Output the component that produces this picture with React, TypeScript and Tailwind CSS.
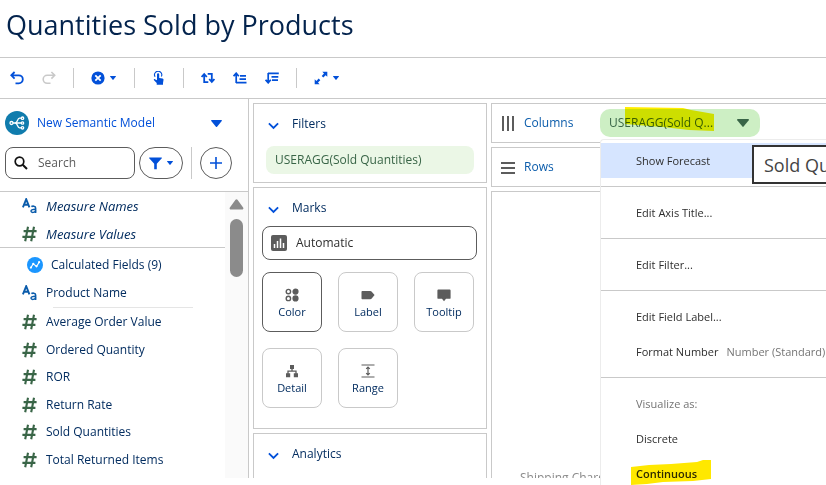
import React from "react";

type FieldKind = "text" | "number";

function TextFieldIcon() {
  return (
    <svg width="15" height="16" viewBox="0 0 15 16" fill="none" stroke="#0b5cab" aria-hidden="true">
      <path d="M.9 9.4 4.2 1.2l3.2 8.2M2 6.8h4.3" strokeWidth="1.9" />
      <path d="M9.4 8.7c.8-.7 4.2-1.1 4.2 1.2v5" strokeWidth="1.6" />
      <path d="M13.6 11.2c-2.3 0-4.6.2-4.6 1.9 0 2.2 4.6 1.5 4.6-.6" strokeWidth="1.4" />
    </svg>
  );
}

function NumberFieldIcon() {
  return (
    <svg width="15" height="16" viewBox="0 0 15 16" fill="none" stroke="#396547" strokeWidth="2.1" aria-hidden="true">
      <path d="M6 .8 3.2 15.2M12 .8 9.2 15.2M1.6 5.1h13M.4 10.9h13" />
    </svg>
  );
}

function Caret({ className }: { className: string }) {
  return (
    <svg className={className} viewBox="0 0 10 6" fill="currentColor" preserveAspectRatio="none" aria-hidden="true">
      <path d="M.6 0h8.8c.5 0 .7.5.4.9L5.5 5.7a.7.7 0 0 1-1 0L.2.9C-.1.5.1 0 .6 0z" />
    </svg>
  );
}

function Chevron() {
  return (
    <svg className="mt-1" width="11" height="8" viewBox="0 0 11 8" fill="none" stroke="#0250d9" strokeWidth="1.8" aria-hidden="true">
      <path d="M.9 1.3 5.5 5.9l4.6-4.6" />
    </svg>
  );
}

function ToolButton({ label, children }: { label: string; children: React.ReactNode }) {
  return (
    <button type="button" aria-label={label} className="flex h-5 items-center gap-1 text-[#0250d9]">
      {children}
    </button>
  );
}

function ToolDivider() {
  return <span className="h-5 w-px bg-[#c9c9c9]" />;
}

function Toolbar() {
  return (
    <div role="toolbar" aria-label="Visualization" className="flex h-[41px] shrink-0 items-center border-b border-[#c9c9c9] pl-[10px]">
      <div className="flex w-[63px] items-center gap-[18px]">
        <ToolButton label="Undo">
          <svg width="14" height="14" viewBox="0 0 14 14" fill="none" stroke="currentColor" strokeWidth="1.8">
            <path d="M4.6 1 1.3 4.3l3.3 3.3M1.6 4.3h7.2a4 4 0 0 1 0 8H5.5" />
          </svg>
        </ToolButton>
        <button type="button" aria-label="Redo" disabled className="flex h-5 items-center text-[#c9c9c9]">
          <svg width="14" height="14" viewBox="0 0 14 14" fill="none" stroke="currentColor" strokeWidth="1.6">
            <path d="M9.4 1l3.3 3.3-3.3 3.3M12.4 4.3H5.2a4 4 0 0 0 0 8h3.3" />
          </svg>
        </button>
      </div>
      <ToolDivider />
      <div className="flex w-[60px] items-center pl-[17px]">
        <ToolButton label="Clear">
          <svg width="14" height="14" viewBox="0 0 14 14">
            <circle cx="7" cy="7" r="6.6" fill="currentColor" />
            <path d="M4.3 4.3l5.4 5.4M9.7 4.3 4.3 9.7" stroke="#fff" strokeWidth="1.8" />
          </svg>
          <Caret className="ml-px h-1 w-[6px]" />
        </ToolButton>
      </div>
      <ToolDivider />
      <div className="flex w-12 items-center justify-center">
        <ToolButton label="Interact">
          <svg width="12" height="14" viewBox="0 0 12 14">
            <path d="M2.1 5.8A3.6 3.6 0 1 1 8.3 5.6" fill="none" stroke="currentColor" strokeWidth="1.1" />
            <path d="M4 3.4a1.1 1.1 0 0 1 2.2 0V7l3.3.6c.7.1 1.1.6 1 1.3l-.5 3H3.7L1 9.3c-.6-.7.1-1.5.9-1.1L4 9.3zM3.7 11.5h6.3v2.3H3.7z" fill="currentColor" />
          </svg>
        </ToolButton>
      </div>
      <ToolDivider />
      <div className="flex w-28 items-center justify-center gap-[18px]">
        <ToolButton label="Swap rows and columns">
          <svg width="14" height="12" viewBox="0 0 14 12" fill="none" stroke="currentColor" strokeWidth="1.8">
            <path d="M3.2 11V2.5M.6 5l2.6-3 2.6 3M3 10.2h4.3M10.8 1v8.5M8.2 7l2.6 3 2.6-3M6.7 1.8H11" />
          </svg>
        </ToolButton>
        <ToolButton label="Sort ascending">
          <svg width="14" height="12" viewBox="0 0 14 12" fill="none" stroke="currentColor" strokeWidth="1.7">
            <path d="M3.2 11V1.5M.6 4.2l2.6-3 2.6 3M3 10.6h10.5M6.500 7.200h6.500M7 3.800h6" />
          </svg>
        </ToolButton>
        <ToolButton label="Sort descending">
          <svg width="14" height="12" viewBox="0 0 14 12" fill="none" stroke="currentColor" strokeWidth="1.7">
            <path d="M3.2 1v9.5M.6 7.800l2.600 3 2.600-3M3 1.400h10.800M6.500 4.800h6.800M7 8.200h6" />
          </svg>
        </ToolButton>
      </div>
      <ToolDivider />
      <div className="flex items-center pl-[17px]">
        <ToolButton label="Fit">
          <svg width="14" height="14" viewBox="0 0 14 14" fill="currentColor">
            <path d="M8.300.8h5v5l-1.700-1.600-2.300 2.300-1.600-1.600L10 2.600zM.7 8.300l1.700 1.600 2.300-2.300 1.600 1.600L4 11.500l1.600 1.700H.7z" />
          </svg>
          <Caret className="ml-px h-1 w-[6px]" />
        </ToolButton>
      </div>
    </div>
  );
}

function Field({ kind, italic, children }: { kind: FieldKind; italic?: boolean; children: string }) {
  return (
    <li className="flex h-7 items-center gap-[9px] pl-[22px] even:h-[27px]">
      {kind === "text" ? <TextFieldIcon /> : <NumberFieldIcon />}
      <span className={italic ? "text-[13px] italic" : ""}>{children}</span>
    </li>
  );
}

const measures = [
  "Average Order Value",
  "Ordered Quantity",
  "ROR",
  "Return Rate",
  "Sold Quantities",
  "Total Returned Items",
];

function DataPanel() {
  return (
    <aside className="flex w-[249px] shrink-0 flex-col border-r border-[#c9c9c9]">
      <div className="flex h-12 shrink-0 items-center pl-[5px]">
        <svg width="24" height="24" viewBox="0 0 24 24" aria-hidden="true">
          <circle cx="12" cy="12" r="12" fill="#107cad" />
          <g fill="none" stroke="#fff" strokeWidth="1.3">
            <circle cx="6.5" cy="12" r="1.500" />
            <path d="M8 12h8M16.500 7.200h-2c-2.500 0-1.500 4.800-4.500 4.800 3 0 2 4.800 4.500 4.800h2" />
            <circle cx="17.500" cy="7.200" r="1.200" />
            <circle cx="17.500" cy="12" r="1.200" />
            <circle cx="17.500" cy="16.800" r="1.200" />
          </g>
        </svg>
        <button type="button" className="ml-2 flex flex-1 items-center justify-between pr-[26px] text-[#0250d9]">
          New Semantic Model
          <Caret className="h-[7px] w-[11px]" />
        </button>
      </div>
      <div className="flex h-[45px] shrink-0 items-start border-b border-[#c9c9c9] pl-[5px]">
        <label className="flex h-8 w-[130px] items-center rounded-lg border border-[#5c5c5c] pl-2">
          <svg width="14" height="14" viewBox="0 0 14 14" fill="none" stroke="#111" aria-label="Search fields">
            <circle cx="5.500" cy="5.500" r="4.300" strokeWidth="1.700" />
            <path d="m8.700 8.700 4.300 4.300" strokeWidth="2" />
          </svg>
          <input type="search" placeholder="Search" className="ml-[10px] w-20 bg-transparent outline-none placeholder:text-[#5c5c5c]" />
        </label>
        <button type="button" aria-label="Filter fields" className="ml-1 flex h-8 w-11 items-center justify-center gap-[5px] rounded-full border border-[#5c5c5c] text-[#0250d9]">
          <svg width="13" height="13" viewBox="0 0 13 13" fill="currentColor">
            <path d="M.5.500h12c.5 0 .6.500.3.800L7.800 6.800v5.500H5.200V6.800L.2 1.300C-.1 1 0 .500.500.500z" />
          </svg>
          <Caret className="h-1 w-[6px]" />
        </button>
        <span className="ml-2 h-8 w-px bg-[#c9c9c9]" />
        <button type="button" aria-label="Add" className="ml-2 flex size-8 items-center justify-center rounded-full border border-[#5c5c5c]">
          <svg width="12" height="12" viewBox="0 0 12 12" stroke="#0250d9" strokeWidth="1.600">
            <path d="M6 0v12M0 6h12" />
          </svg>
        </button>
      </div>
      <div className="flex min-h-0 flex-1 overflow-hidden">
        <div className="min-w-0 flex-1 text-[#032d60]">
          <ul className="border-b border-[#c9c9c9]">
            <Field kind="text" italic>Measure Names</Field>
            <Field kind="number" italic>Measure Values</Field>
          </ul>
          <div className="flex h-[31px] items-center gap-2 pt-[2px] pl-[27px]">
            <svg width="16" height="16" viewBox="0 0 16 16" aria-hidden="true">
              <circle cx="8" cy="8" r="8" fill="#1b96ff" />
              <path d="m3.800 10.700 2.400-3.800 3.400 2.500 2.600-4.200" fill="none" stroke="#fff" strokeWidth="1.100" />
              <g fill="#fff">
                <circle cx="3.900" cy="10.600" r="1.100" />
                <circle cx="6.300" cy="6.800" r="1.100" />
                <circle cx="9.500" cy="9.300" r="1.100" />
                <circle cx="12.100" cy="5.200" r="1.100" />
              </g>
            </svg>
            Calculated Fields (9)
          </div>
          <ul>
            <Field kind="text">Product Name</Field>
          </ul>
          <div className="ml-[53px] h-px w-[140px] bg-[#e5e5e5]" />
          <ul>
            {measures.map((name) => (
              <Field key={name} kind="number">{name}</Field>
            ))}
          </ul>
        </div>
        <div className="flex w-[23px] flex-col items-center bg-[#fafafa] pt-[7px]">
          <svg width="15" height="11" viewBox="0 0 15 11" fill="#8b8b8b" aria-hidden="true">
            <path d="M6.500.8a1.300 1.300 0 0 1 2 0l5.600 7.600c.7 1 .2 2.200-.9 2.200H1.800C.7 10.600.2 9.400.9 8.400z" />
          </svg>
          <span className="mt-[9px] h-[58px] w-[13px] rounded-full bg-[#8b8b8b]" />
        </div>
      </div>
    </aside>
  );
}

function CardHeader({ children }: { children: string }) {
  return (
    <h2>
      <button type="button" aria-expanded="true" className="flex h-10 w-full items-center gap-[13px] pl-[14px] text-[#032d60]">
        <Chevron />
        {children}
      </button>
    </h2>
  );
}

function Tile({ label, selected, children }: { label: string; selected?: boolean; children: React.ReactNode }) {
  return (
    <button
      type="button"
      className={
        "flex size-15 flex-col items-center justify-end rounded-lg border pb-[11px] text-[11px] text-[#032d60] " +
        (selected ? "border-[#5c5c5c]" : "border-[#c9c9c9]")
      }
    >
      <svg width="14" height="14" viewBox="0 0 14 14" fill="#5c5c5c" aria-hidden="true">
        {children}
      </svg>
      <span className="mt-[2px] leading-4">{label}</span>
    </button>
  );
}

function ShelfPanel() {
  return (
    <div className="flex w-[234px] shrink-0 flex-col gap-1 overflow-hidden">
      <section className="h-20 shrink-0 border border-[#c9c9c9]">
        <CardHeader>Filters</CardHeader>
        <button type="button" className="ml-3 mt-[2px] flex h-7 w-52 items-center rounded-lg bg-[#ebf7e6] pl-[9px] text-[#396547]">
          USERAGG(Sold Quantities)
        </button>
      </section>
      <section className="h-[242px] shrink-0 border border-[#c9c9c9]">
        <CardHeader>Marks</CardHeader>
        <div className="ml-2 mr-[9px] -mt-[2px] flex h-[34px] items-center rounded-lg border border-[#5c5c5c] pl-2">
          <svg width="16" height="16" viewBox="0 0 16 16" aria-hidden="true">
            <rect width="16" height="16" rx="2" fill="#5c5c5c" />
            <path d="M3.500 9v4M6.500 6v7M9.500 3.500V13M12.500 8v5" stroke="#fff" strokeWidth="1.500" />
          </svg>
          <select aria-label="Mark type" className="ml-[9px] flex-1 appearance-none bg-transparent text-[#2e2e2e] outline-none">
            <option>Automatic</option>
          </select>
        </div>
        <div className="ml-2 mt-3 grid grid-cols-[repeat(3,60px)] gap-4">
          <Tile label="Color" selected>
            <g stroke="#5c5c5c" strokeWidth="1.400">
              <circle cx="3.400" cy="3.600" r="2.200" fill="#fff" />
              <circle cx="10.500" cy="3.600" r="2.400" />
              <circle cx="3.400" cy="10.400" r="2.200" fill="#fff" />
              <circle cx="10.500" cy="10.400" r="2.400" />
            </g>
          </Tile>
          <Tile label="Label">
            <path d="M1.500 3h7.800c.5 0 .9.200 1.200.6L13.600 7l-3.100 3.700c-.3.300-.7.500-1.200.5H1.500C.9 11.200.5 10.800.5 10.200V4c0-.6.400-1 1-1z" />
          </Tile>
          <Tile label="Tooltip">
            <path d="M1.300 1.500h11.400c.5 0 .9.400.9.900v7.500c0 .5-.4.900-.9.900H9L7 13.200l-2-2.400H1.300c-.5 0-.9-.4-.9-.9V2.400c0-.5.400-.9.900-.9z" />
          </Tile>
          <Tile label="Detail">
            <path d="M5 1h4v4H5zM1 9.200h4.200v4H1zM8.800 9.200H13v4H8.800z" />
            <path d="M7 4v3.200M3 10V7.200h8V10" fill="none" stroke="#5c5c5c" strokeWidth="1.300" />
          </Tile>
          <Tile label="Range">
            <path d="M.5 1h13M.5 13h13M7 3v8M5.200 4.800 7 3l1.800 1.800M5.200 9.200 7 11l1.800-1.800" fill="none" stroke="#5c5c5c" strokeWidth="1.200" />
          </Tile>
        </div>
      </section>
      <section className="min-h-0 flex-1 border border-b-0 border-[#c9c9c9]">
        <CardHeader>Analytics</CardHeader>
      </section>
    </div>
  );
}

function MenuItem({ active, strong, children }: { active?: boolean; strong?: boolean; children: React.ReactNode }) {
  return (
    <button
      type="button"
      role="menuitem"
      className={
        "flex h-[35px] w-full items-center gap-2 whitespace-nowrap pl-[35px] text-left " +
        (active ? "bg-[#d6e5ff] " : "") +
        (strong ? "font-semibold" : "")
      }
    >
      {children}
    </button>
  );
}

function MenuDivider() {
  return <hr className="my-2 border-[#c9c9c9]" />;
}

function PillMenu() {
  return (
    <div role="menu" className="absolute left-0 top-[30px] z-10 w-80 rounded-t border-l border-t border-[#ececec] bg-white pt-[3px] text-[11px] text-[#2e2e2e]">
      <MenuItem active>Show Forecast</MenuItem>
      <MenuDivider />
      <MenuItem>Edit Axis Title...</MenuItem>
      <MenuDivider />
      <MenuItem>Edit Filter...</MenuItem>
      <MenuDivider />
      <MenuItem>Edit Field Label...</MenuItem>
      <MenuItem>
        Format Number <span className="text-[#747474]">Number (Standard)</span>
      </MenuItem>
      <MenuDivider />
      <div className="flex h-[35px] items-center pl-[35px] text-[#747474]">Visualize as:</div>
      <MenuItem>Discrete</MenuItem>
      <MenuItem strong>Continuous</MenuItem>
      <svg className="pointer-events-none absolute left-[30px] top-[320px] mix-blend-multiply" width="82" height="28" viewBox="0 0 82 28" aria-hidden="true">
        <path d="M0 7 18 5l22-1 26-2L72 0h8v19l-18 2-30 1-16 2-16 1z" fill="#ffe800" />
      </svg>
      <div role="tooltip" className="absolute left-[151px] top-[5px] flex h-[39px] items-center whitespace-nowrap border-2 border-[#333] bg-white px-[10px] text-lg text-[#444]">
        Sold Quantities
      </div>
    </div>
  );
}

function Canvas() {
  return (
    <div className="flex min-w-0 flex-1 flex-col gap-1">
      <section className="flex h-10 shrink-0 items-center border border-r-0 border-[#c9c9c9] pl-[9px]">
        <svg width="15" height="15" viewBox="0 0 15 15" stroke="#5c5c5c" strokeWidth="2" aria-hidden="true">
          <path d="M2 0v15M7 0v15M12 0v15" />
        </svg>
        <h2 className="ml-2 w-[76px] text-[#0b5cab]">Columns</h2>
        <div className="relative">
          <button type="button" aria-haspopup="menu" aria-expanded="true" className="flex h-7 w-40 items-center justify-between rounded-[10px] bg-[#cdefc4] pl-[9px] pr-[11px] text-[#396547]">
            USERAGG(Sold Q...
            <Caret className="h-2 w-3" />
          </button>
          <svg className="pointer-events-none absolute -top-[2px] left-[25px] mix-blend-multiply" width="89" height="25" viewBox="0 0 89 25" aria-hidden="true">
            <path d="M0 0 58 1l8 2 23 4v17L64 23 38 20 12 18 0 17z" fill="#ffed00" />
          </svg>
          <PillMenu />
        </div>
      </section>
      <section className="flex h-10 shrink-0 items-center border border-r-0 border-[#c9c9c9] pl-[9px]">
        <svg width="15" height="15" viewBox="0 0 15 15" stroke="#5c5c5c" strokeWidth="2" aria-hidden="true">
          <path d="M0 3h14M0 8h14M0 13h14" />
        </svg>
        <h2 className="ml-2 text-[#0b5cab]">Rows</h2>
      </section>
      <section className="flex min-h-0 flex-1 flex-col justify-end overflow-hidden border border-b-0 border-r-0 border-[#c9c9c9]">
        <div className="h-2 shrink-0 pl-7 leading-4 text-[#8a8a8a]">Shipping Charges</div>
      </section>
    </div>
  );
}

export default function App() {
  return (
    <div className="flex h-screen flex-col overflow-hidden bg-white pb-[7px] font-['Segoe_UI','Open_Sans','Noto_Sans',sans-serif] text-xs leading-5">
      <header className="flex h-[58px] shrink-0 items-center border-b border-[#c9c9c9] pb-2 pl-[6px]">
        <h1 className="text-[27px] text-[#03234d]">Quantities Sold by Products</h1>
      </header>
      <Toolbar />
      <main className="flex min-h-0 flex-1">
        <DataPanel />
        <div className="flex min-w-0 flex-1 gap-1 pl-1 pt-1">
          <ShelfPanel />
          <Canvas />
        </div>
      </main>
    </div>
  );
}
